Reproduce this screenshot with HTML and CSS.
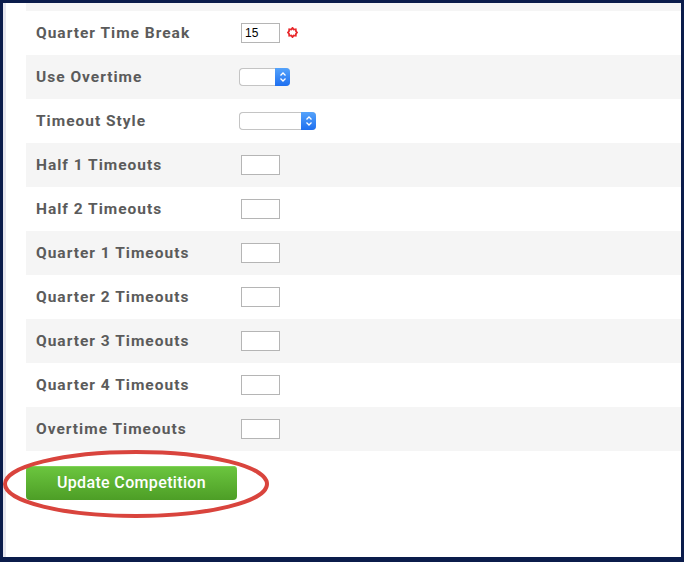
FILE: index.html
```html
<!DOCTYPE html>
<html>
<head>
<meta charset="utf-8">
<link rel="stylesheet" href="styles.css">
</head>
<body>
<div class="frame">
  <div class="inner">
    <div class="top-strip"></div>
    <div class="form">
      <div class="row">
        <div class="label">Quarter Time Break</div>
        <div class="ctrl"><input class="num" type="text" value="15">
          <svg class="req" width="11" height="11" viewBox="0 0 10 10"><polygon points="5,0.8 6.1,2.3 7.97,2.03 8.2,3.9 9.2,5 8.2,6.1 7.97,7.97 6.1,7.7 5,9.2 3.9,7.7 2.03,7.97 1.8,6.1 0.8,5 1.8,3.9 2.03,2.03 3.9,2.3" fill="none" stroke="#e8282b" stroke-width="1.6"/></svg>
        </div>
      </div>
      <div class="row alt">
        <div class="label">Use Overtime</div>
        <div class="ctrl"><div class="select sm"><span class="sel-body"></span><span class="sel-btn"><svg width="8" height="12" viewBox="0 0 8 12"><path d="M1.5 4.5 L4 2 L6.5 4.5 M1.5 7.5 L4 10 L6.5 7.5" fill="none" stroke="#fff" stroke-width="1.3"/></svg></span></div></div>
      </div>
      <div class="row">
        <div class="label">Timeout Style</div>
        <div class="ctrl"><div class="select lg"><span class="sel-body"></span><span class="sel-btn"><svg width="8" height="12" viewBox="0 0 8 12"><path d="M1.5 4.5 L4 2 L6.5 4.5 M1.5 7.5 L4 10 L6.5 7.5" fill="none" stroke="#fff" stroke-width="1.3"/></svg></span></div></div>
      </div>
      <div class="row alt">
        <div class="label">Half 1 Timeouts</div>
        <div class="ctrl"><input class="num" type="text"></div>
      </div>
      <div class="row">
        <div class="label">Half 2 Timeouts</div>
        <div class="ctrl"><input class="num" type="text"></div>
      </div>
      <div class="row alt">
        <div class="label">Quarter 1 Timeouts</div>
        <div class="ctrl"><input class="num" type="text"></div>
      </div>
      <div class="row">
        <div class="label">Quarter 2 Timeouts</div>
        <div class="ctrl"><input class="num" type="text"></div>
      </div>
      <div class="row alt">
        <div class="label">Quarter 3 Timeouts</div>
        <div class="ctrl"><input class="num" type="text"></div>
      </div>
      <div class="row">
        <div class="label">Quarter 4 Timeouts</div>
        <div class="ctrl"><input class="num" type="text"></div>
      </div>
      <div class="row alt">
        <div class="label">Overtime Timeouts</div>
        <div class="ctrl"><input class="num" type="text"></div>
      </div>
      <div class="actions">
        <button class="btn" type="button">Update Competition</button>
        <svg class="ring" width="274" height="74" viewBox="0 0 274 74"><ellipse cx="133" cy="34" rx="131" ry="32" fill="none" stroke="#d9443d" stroke-width="4"/></svg>
      </div>
    </div>
  </div>
</div>
</body>
</html>
```
FILE: styles.css
```css
* { box-sizing: border-box; }
html, body { margin: 0; padding: 0; background: #0b1c4b; }
body { width: 684px; height: 562px; overflow: hidden; }
.frame {
  width: 684px;
  height: 562px;
  border-top: 3px solid #0b1c4b;
  border-left: 3px solid #0b1c4b;
  border-right: 3px solid #0b1c4b;
  border-bottom: 5px solid #0b1c4b;
  background: #fff;
}
.inner {
  height: 100%;
  border-left: 3px solid #e6e6ee;
  background: #fff;
}
.top-strip {
  height: 8px;
  margin-left: 20px;
  background: #f5f5f5;
}
.form {
  position: relative;
  padding-left: 20px;
}
.row {
  display: flex;
  align-items: center;
  height: 44px;
}
.row.alt { background: #f5f5f5; }
.label {
  width: 215px;
  padding-left: 10px;
  font-family: Roboto, "Liberation Sans", sans-serif;
  font-weight: 700;
  font-size: 15.5px;
  letter-spacing: 1px;
  color: #5b5b5b;
}
.ctrl {
  display: flex;
  align-items: center;
  gap: 7px;
}
.num {
  width: 39px;
  height: 20px;
  border: 1px solid #b5b5b5;
  background: #fff;
  padding: 1px 3px;
  font-family: "Liberation Sans", Arial, sans-serif;
  font-size: 12px;
  color: #000;
  outline: none;
  margin: 0;
}
.req { display: block; margin-top: -1px; }
.select {
  display: flex;
  height: 18px;
  margin-left: -2px;
  border-radius: 4px;
  overflow: hidden;
  box-shadow: 0 0 0 1px #c6c6c6 inset;
}
.select.sm { width: 51px; }
.select.lg { width: 77px; }
.sel-body {
  flex: 1;
  background: #fff;
  border: 1px solid #c4c4c4;
  border-right: none;
  border-radius: 4px 0 0 4px;
}
.sel-btn {
  width: 15px;
  display: flex;
  align-items: center;
  justify-content: center;
  background: linear-gradient(#55a3fb, #1e6ff0);
}
.actions {
  position: relative;
  padding-top: 15px;
  height: 100px;
}
.btn {
  display: block;
  width: 211px;
  height: 34px;
  border: none;
  border-radius: 4px;
  background: linear-gradient(#6cc63f, #4d9e26);
  box-shadow: inset 0 1px 0 #7fd458;
  color: #fff;
  font-family: Roboto, "Liberation Sans", sans-serif;
  font-weight: 500;
  font-size: 16px;
  letter-spacing: 0.35px;
  padding: 0 0 2px 0;
  margin: 0;
}
.ring {
  position: absolute;
  left: -23px;
  top: -1px;
}
```
